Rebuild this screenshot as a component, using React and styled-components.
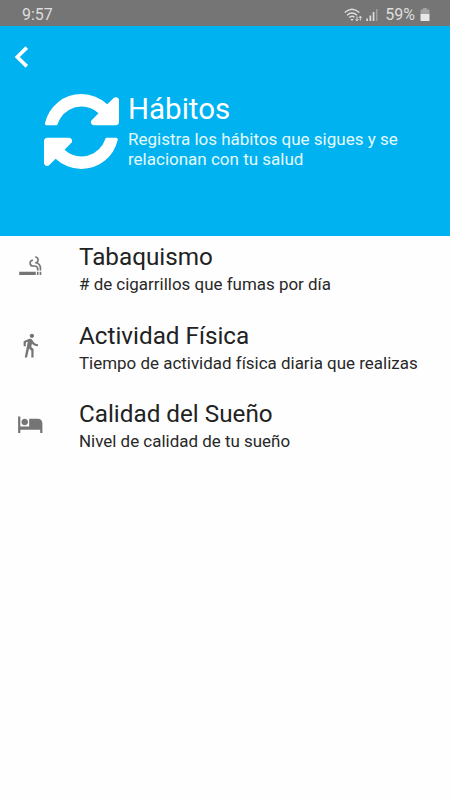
import React from "react";
import { MdDirectionsWalk, MdHotel, MdSmokingRooms } from "react-icons/md";
import styled, { createGlobalStyle } from "styled-components";

const GlobalStyle = createGlobalStyle`
	* {
		box-sizing: border-box;
	}

	body {
		margin: 0;
		background-color: #fefefe;
		font-family: Roboto, sans-serif;
	}
`;

const Screen = styled.div`
	width: 100%;
	height: 800px;
	overflow: hidden;
`;

const StatusBar = styled.div`
	display: flex;
	align-items: center;
	justify-content: space-between;
	height: 26px;
	padding: 3px 20px 0 22px;
	background-color: #757575;
	color: #dedede;
	font-size: 16px;
	line-height: 22px;
`;

const StatusIcons = styled.div`
	display: flex;
	align-items: center;
	gap: 3px;
	height: 22px;
`;

const Battery = styled.span`
	margin: 0 2px 0 3px;
`;

const Header = styled.header`
	height: 210px;
	padding-top: 20px;
	background-color: #00b2f0;
	color: #fff;
`;

const BackButton = styled.button`
	display: block;
	height: 22px;
	margin-left: 14px;
	padding: 0;
	border: none;
	background: none;
	color: inherit;
`;

const Intro = styled.div`
	display: flex;
	gap: 8.7px;
	padding: 24px 0 0 44.3px;
`;

const HeaderIcon = styled.svg`
	flex: none;
	width: 75px;
	height: 75px;
	margin-top: 1.5px;
`;

const Title = styled.h1`
	margin: 0;
	font-size: 29.5px;
	font-weight: 400;
	line-height: 34px;
`;

const Description = styled.p`
	width: 290px;
	margin: 3px 0 0;
	font-size: 17px;
	line-height: 20px;
	color: #e4fafd;
`;

const HabitList = styled.ul`
	margin: 0;
	padding: 6px 0 0;
	list-style: none;
`;

const HabitItem = styled.li`
	display: flex;
	height: 78.7px;
`;

const IconBox = styled.div`
	flex: none;
	width: 79px;
	padding: 11.6px 0 0 17.3px;
	color: #757575;
	font-size: 26.5px;
	line-height: 0;
`;

const HabitName = styled.div`
	color: #222;
	font-size: 24.25px;
	line-height: 30px;
`;

const HabitDetail = styled.div`
	margin-top: 2px;
	color: #282828;
	font-size: 16.95px;
	line-height: 20px;
`;

const habits = [
	{ icon: MdSmokingRooms, name: "Tabaquismo", detail: "# de cigarrillos que fumas por día" },
	{ icon: MdDirectionsWalk, name: "Actividad Física", detail: "Tiempo de actividad física diaria que realizas" },
	{ icon: MdHotel, name: "Calidad del Sueño", detail: "Nivel de calidad de tu sueño" },
];

function Habit({ habit }) {
	const { icon: Icon, name, detail } = habit;

	return (
		<HabitItem>
			<IconBox>
				<Icon />
			</IconBox>
			<div>
				<HabitName>{name}</HabitName>
				<HabitDetail>{detail}</HabitDetail>
			</div>
		</HabitItem>
	);
}

function RefreshIcon() {
	return (
		<HeaderIcon viewBox="0 128 1536 1536" fill="currentColor">
			<path d="M1511 1056q0 5-1 7-64 268-268 434.5t-478 166.5q-146 0-282.5-55t-243.5-157l-129 129q-19 19-45 19t-45-19-19-45v-448q0-26 19-45t45-19h448q26 0 45 19t19 45-19 45l-137 137q71 66 161 102t187 36q134 0 250-65t186-179q11-17 53-117 8-23 30-23h192q13 0 22.5 9.5t9.5 22.5zm25-800v448q0 26-19 45t-45 19h-448q-26 0-45-19t-19-45 19-45l138-138q-148-137-349-137-134 0-250 65t-186 179q-11 17-53 117-8 23-30 23h-199q-13 0-22.5-9.5t-9.5-22.5v-7q65-268 270-434.5t480-166.5q146 0 284 55.5t245 156.5l130-129q19-19 45-19t45 19 19 45z" />
		</HeaderIcon>
	);
}

function WifiIcon() {
	return (
		<svg width="19" height="14" viewBox="0 0 19 14" fill="none" stroke="#dedede" strokeWidth="1.4">
			<path d="M.7 4.6Q8-2 15.3 4.6" />
			<path d="M3 7.2Q8 2.8 13 7.2" />
			<path d="M5.2 9.6Q8 7 10.5 9.2" />
			<path d="M6.5 11.2q1.5-1 3 0L8 13z" fill="#dedede" stroke="none" />
			<path d="M13 8.5v4.2M11.6 11.3L13 12.9l1.4-1.6M16.3 12.5V8.3M14.9 9.8l1.4-1.6 1.4 1.6" strokeWidth="1" />
		</svg>
	);
}

function SignalIcon() {
	return (
		<svg width="13" height="14" viewBox="0 0 13 14" fill="#dedede">
			<path d="M.3 10.5H2V13H.3zM3.5 7.5h1.7V13H3.5zM6.7 4h1.7v9H6.7z" />
			<path d="M10 1h1.5v12H10z" opacity=".4" />
		</svg>
	);
}

function BatteryIcon() {
	return (
		<svg width="10" height="14" viewBox="0 0 10 14" fill="#e8e8e8">
			<path d="M3 0h4v1.5h2q.5 0 .5.5v4H.5V2q0-.5.5-.5h2z" opacity=".4" />
			<path d="M.5 6h9v6.5q0 .5-.5.5H1q-.5 0-.5-.5z" />
		</svg>
	);
}

function App() {
	return (
		<Screen>
			<GlobalStyle />
			<StatusBar>
				<span>9:57</span>
				<StatusIcons>
					<WifiIcon />
					<SignalIcon />
					<Battery>59%</Battery>
					<BatteryIcon />
				</StatusIcons>
			</StatusBar>
			<Header>
				<BackButton aria-label="Atrás">
					<svg width="15" height="22" viewBox="0 0 15 22" fill="none" stroke="currentColor" strokeWidth="3.6">
						<path d="M12.8 1.6L3.3 11l9.5 9.4" />
					</svg>
				</BackButton>
				<Intro>
					<RefreshIcon />
					<div>
						<Title>Hábitos</Title>
						<Description>Registra los hábitos que sigues y se relacionan con tu salud</Description>
					</div>
				</Intro>
			</Header>
			<HabitList>
				{habits.map((habit) => (
					<Habit key={habit.name} habit={habit} />
				))}
			</HabitList>
		</Screen>
	);
}

export default App;
